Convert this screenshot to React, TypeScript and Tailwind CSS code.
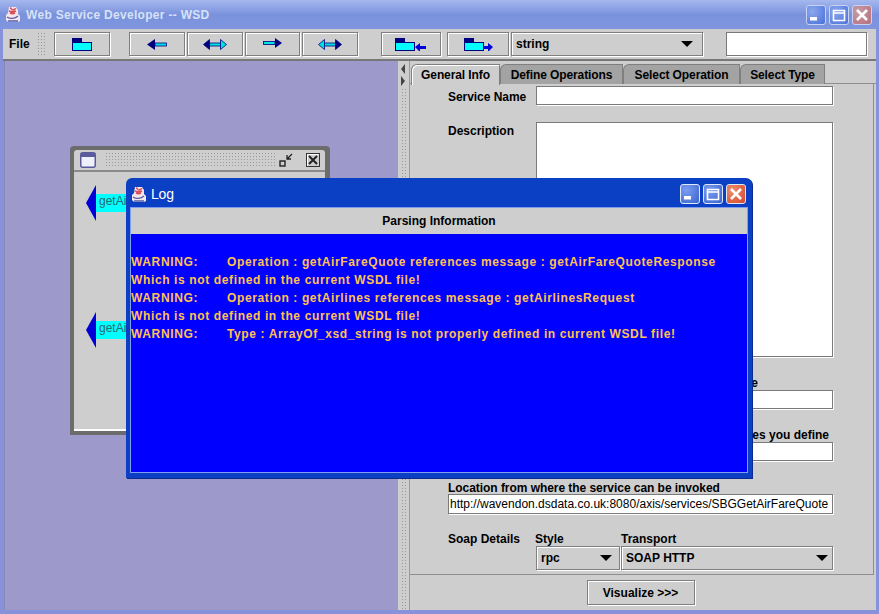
import React from "react";

const bevel = "border border-[#7f7f7f] shadow-[1px_1px_0_#ffffff,inset_1px_1px_0_#ffffff]";
const field = "border border-[#7a7a7a] bg-white shadow-[1px_1px_0_#ffffff]";
const dots = "bg-[radial-gradient(#9a9a9a_0.8px,transparent_0.9px)] bg-[length:3px_3px]";

function JavaIcon() {
  return (
    <svg width="16" height="17" viewBox="0 0 16 17">
      <path d="M4 1h7l2 3v4l2 2v5l-2 1H3l-2-2V9l2-2z" fill="#f4e6ea" />
      <path d="M5 2c2 0 1 2 3 2s2-2 3-1M4 5c2 1 5 1 7 0M5 7c2 1 3 1 5 0" stroke="#d8505a" strokeWidth="1.5" fill="none" />
      <path d="M2 11c3 2 8 2 11-1M3 15h10" stroke="#5a5fa8" strokeWidth="1.3" fill="none" />
    </svg>
  );
}

function WinBtn({ kind, size, washed }: { kind: "min" | "max" | "close"; size: number; washed?: boolean }) {
  const bg =
    kind === "close"
      ? washed
        ? "bg-[radial-gradient(circle_at_30%_30%,#c99aa6,#b4707c)] border-[#c7d3f3]"
        : "bg-[radial-gradient(circle_at_30%_30%,#ee8f70,#d4472a)] border-[#dfe8fb]"
      : washed
        ? "bg-[radial-gradient(circle_at_30%_30%,#8aa8ee,#4a70d8)] border-[#c7d3f3]"
        : "bg-[radial-gradient(circle_at_30%_30%,#7b9df0,#3a62cf)] border-[#dfe8fb]";
  return (
    <div className={`rounded-[3px] border flex items-center justify-center ${bg}`} style={{ width: size, height: size }}>
      <svg width={size - 4} height={size - 4} viewBox="0 0 16 16">
        {kind === "min" && <rect x="2" y="10" width="7" height="3.5" fill="#fff" />}
        {kind === "max" && <path d="M2.5 3.5h11v10h-11z M2.5 3.5h11v2.5h-11z" fill="none" stroke="#fff" strokeWidth="1.6" />}
        {kind === "close" && <path d="M3 3l10 10M13 3L3 13" stroke="#fff" strokeWidth="2.6" />}
      </svg>
    </div>
  );
}

function Folder() {
  return (
    <>
      <rect x="0" y="0" width="10" height="5" fill="#00007f" />
      <rect x="0.5" y="4.5" width="19" height="8" fill="#00ffff" stroke="#00007f" />
    </>
  );
}

function ToolBtn({ className, children }: { className: string; children: React.ReactNode }) {
  return <div className={`h-[24px] flex items-center justify-center bg-[#cecece] ${bevel} ${className}`}>{children}</div>;
}

function Arrow({ kind }: { kind: "left" | "both" | "right" | "both2" }) {
  if (kind === "left")
    return (
      <svg width="20" height="11" viewBox="0 0 20 11">
        <rect x="8" y="4" width="11.5" height="3" fill="#00e0e0" stroke="#00007f" strokeWidth="0.8" />
        <path d="M8 0v11L0 5.5z" fill="#00007f" />
      </svg>
    );
  if (kind === "right")
    return (
      <svg width="20" height="10" viewBox="0 0 20 10" className="mb-[2px]">
        <rect x="0.5" y="3.5" width="11.5" height="3" fill="#00e0e0" stroke="#00007f" strokeWidth="0.8" />
        <path d="M12 0v10l7 -5z" fill="#00007f" />
      </svg>
    );
  const leftFill = kind === "both2" ? "#00e0e0" : "#00007f";
  const rightFill = kind === "both" ? "#00e0e0" : "#00007f";
  return (
    <svg width="24" height="11" viewBox="0 0 24 11">
      <rect x="6" y="4" width="12" height="3" fill="#00e0e0" stroke="#00007f" strokeWidth="0.8" />
      <path d="M6.5 0.5v10L0.5 5.5z" fill={leftFill} stroke="#00007f" strokeWidth="0.8" />
      <path d="M17.5 0.5v10l6 -5z" fill={rightFill} stroke="#00007f" strokeWidth="0.8" />
    </svg>
  );
}

function Caret() {
  return <div className="w-0 h-0 border-x-[6px] border-x-transparent border-t-[6px] border-t-black" />;
}

function Combo({ label, className, caretPad }: { label: string; className: string; caretPad: string }) {
  return (
    <div className={`h-[24px] flex items-center justify-between bg-[#cecece] pl-[4px] ${caretPad} ${bevel} ${className}`}>
      <span>{label}</span>
      <Caret />
    </div>
  );
}

function Tab({ label, active, className }: { label: string; active?: boolean; className: string }) {
  return (
    <div
      className={`flex items-center justify-center rounded-tl-[6px] border-t border-r border-l border-[#7f7f7f] tracking-[-0.1px] ${
        active ? "bg-[#cecece] border-b-0 h-[21px] shadow-[inset_1px_1px_0_#ffffff]" : "bg-[#a3a3a3] h-[20px]"
      } ${className}`}
    >
      {label}
    </div>
  );
}

function ServiceNode({ className }: { className: string }) {
  return (
    <div className={`flex items-center ml-[12px] ${className}`}>
      <svg width="10" height="36" viewBox="0 0 10 36" className="shrink-0">
        <path d="M10 0v36L0 18z" fill="#0000d8" />
      </svg>
      <div className="h-[18px] w-[30px] bg-[#00ffff] font-normal text-[#2a6a70] pl-[3px] leading-[14px] text-[12px]">getAi</div>
    </div>
  );
}

const logLines = [
  ["WARNING:", "Operation : getAirFareQuote references message : getAirFareQuoteResponse"],
  ["Which is not defined in the current WSDL file!"],
  ["WARNING:", "Operation : getAirlines references message : getAirlinesRequest"],
  ["Which is not defined in the current WSDL file!"],
  ["WARNING:", "Type : ArrayOf_xsd_string is not properly defined in current WSDL file!"],
];

export default function App() {
  return (
    <div className="relative w-[879px] h-[614px] overflow-hidden bg-[#8792da] font-['Liberation_Sans',Arial,sans-serif] text-[12px] font-bold text-black">
      {/* Title bar */}
      <div className="h-[29px] pl-[5px] pr-[7px] flex items-center bg-gradient-to-b from-[#a5b8ee] via-[#7a92dc] to-[#7f95df]">
        <JavaIcon />
        <span className="ml-[5px] text-[12px] tracking-[0.3px] text-[#d6e2f8]">Web Service Developer -- WSD</span>
        <div className="ml-auto flex gap-[3px]">
          <WinBtn kind="min" size={20} washed />
          <WinBtn kind="max" size={20} washed />
          <WinBtn kind="close" size={20} washed />
        </div>
      </div>

      {/* Toolbar */}
      <div className="h-[32px] mx-[3px] pt-[3px] flex items-start bg-[#cecece] border-b-2 border-b-[#777777]">
        <span className="ml-[6px] w-[28px] h-[24px] flex items-center">File</span>
        <div className={`w-[9px] h-[24px] ${dots}`} />
        <ToolBtn className="ml-[8px] w-[56px]">
          <svg width="20" height="13" viewBox="0 0 20 13"><Folder /></svg>
        </ToolBtn>
        <ToolBtn className="ml-[19px] w-[56px]"><Arrow kind="left" /></ToolBtn>
        <ToolBtn className="ml-[2px] w-[56px]"><Arrow kind="both" /></ToolBtn>
        <ToolBtn className="ml-[2px] w-[55px]"><Arrow kind="right" /></ToolBtn>
        <ToolBtn className="ml-[2px] w-[56px]"><Arrow kind="both2" /></ToolBtn>
        <ToolBtn className="ml-[23px] w-[60px]">
          <svg width="32" height="13" viewBox="0 0 32 13">
            <Folder />
            <path d="M20 9l5-4v3h6v3h-6v3z" fill="#0000d8" />
          </svg>
        </ToolBtn>
        <ToolBtn className="ml-[6px] w-[62px]">
          <svg width="29" height="13" viewBox="0 0 29 13">
            <Folder />
            <path d="M29 9l-5-4v3h-5v3h5v3z" fill="#0000d8" />
          </svg>
        </ToolBtn>
        <Combo label="string" className="ml-[2px] w-[192px]" caretPad="pr-[9px]" />
        <div className={`ml-[23px] w-[141px] h-[24px] ${field}`} />
      </div>

      {/* Main */}
      <div className="flex h-[549px] ml-[3px] mr-[3px]">
        <div className="ml-[1px] w-[394px] bg-[#9d99cb] border-l border-[#8a88b8]" />
        <div className="w-[11px] bg-[#cecece] pt-[3px] pl-[3px] flex flex-col">
          <div className="w-0 h-0 border-y-[5px] border-y-transparent border-r-[4px] border-r-[#444444]" />
          <div className="mt-[2px] w-0 h-0 border-y-[5px] border-y-transparent border-l-[4px] border-l-[#444444]" />
          <div className={`mt-[2px] flex-1 w-[6px] ${dots}`} />
        </div>
        <div className="flex-1 bg-[#cecece] flex flex-col relative border-l border-[#9a9a9a]">
          {/* Tabs */}
          <div className="h-[23px] pt-[3px] pl-[1px] flex items-start border-b border-b-[#8f8f8f]">
            <Tab label="General Info" active className="w-[89px] z-10" />
            <Tab label="Define Operations" className="w-[123px]" />
            <Tab label="Select Operation" className="w-[117px]" />
            <Tab label="Select Type" className="w-[85px]" />
          </div>
          {/* Form */}
          <div className="flex-1 flex flex-col pl-[38px] pr-[40px] mr-[2px] border-r border-r-[#8f8f8f]">
            <div className="flex h-[20px] mt-[1px] items-center">
              <span className="w-[88px] pt-[3px] tracking-[-0.05px]">Service Name</span>
              <div className={`w-[297px] h-[19px] ${field}`} />
            </div>
            <div className="flex mt-[17px] h-[236px]">
              <span className="w-[88px] mt-[2px] leading-[14px]">Description</span>
              <div className={`w-[297px] h-[235px] ${field}`} />
            </div>
            <div className="h-[14px] mt-[18px] text-right leading-[14px] pr-[75px]">e</div>
            <div className={`ml-[88px] w-[297px] h-[19px] ${field}`} />
            <div className="h-[14px] mt-[18px] text-right leading-[14px] pr-[4px] pt-[1px]">es you define</div>
            <div className={`ml-[88px] w-[297px] h-[19px] mt-[1px] ${field}`} />
            <div className="h-[14px] mt-[19px] pt-[1px] leading-[14px] tracking-[-0.05px]">Location from where the service can be invoked</div>
            <div className={`w-[385px] h-[20px] pl-[1px] flex items-center font-normal text-[12px] overflow-hidden whitespace-nowrap ${field}`}>
              http://wavendon.dsdata.co.uk:8080/axis/services/SBGGetAirFareQuote
            </div>
            <div className="flex mt-[18px] h-[14px] leading-[14px]">
              <span className="w-[87px]">Soap Details</span>
              <span className="w-[86px]">Style</span>
              <span>Transport</span>
            </div>
            <div className="flex ml-[88px]">
              <Combo label="rpc" className="w-[84px]" caretPad="pr-[7px]" />
              <Combo label="SOAP HTTP" className="ml-[1px] w-[212px]" caretPad="pr-[4px]" />
            </div>
          </div>
          <div className="h-[36px] mr-[2px] border-t border-[#8f8f8f] flex justify-center pt-[5px] pr-[3px]">
            <div className={`w-[108px] h-[25px] flex items-center justify-center bg-[#cecece] ${bevel}`}>Visualize &gt;&gt;&gt;</div>
          </div>
        </div>
      </div>

      {/* Internal frame */}
      <div className="absolute left-[70px] top-[146px] w-[260px] h-[289px] rounded-t-[4px] bg-[#6c6c6c] p-[4px] pr-[5px] flex flex-col">
        <div className="h-[22px] bg-[#cecece] flex items-center pl-[6px] pr-[5px] rounded-t-[3px] border-b-2 border-b-[#8a8a8a]">
          <svg width="16" height="16" viewBox="0 0 16 16">
            <rect x="0.75" y="0.75" width="14.5" height="14.5" rx="2" fill="#eef0fa" stroke="#5a5a9c" strokeWidth="1.5" />
            <rect x="1" y="1" width="14" height="4" fill="#5a5a9c" />
          </svg>
          <div className={`ml-[9px] w-[170px] h-[16px] ${dots}`} />
          <svg width="16" height="14" viewBox="0 0 16 14" className="ml-[4px]">
            <rect x="1" y="8" width="5" height="5" fill="none" stroke="#222" strokeWidth="1.4" />
            <path d="M8 6l5-5M8 2v4h4" fill="none" stroke="#222" strokeWidth="1.3" />
          </svg>
          <div className="ml-[11px] w-[14px] h-[14px] border border-[#333] shadow-[inset_1px_1px_0_#fff] flex items-center justify-center">
            <svg width="10" height="10" viewBox="0 0 10 10"><path d="M1 1l8 8M9 1L1 9" stroke="#222" strokeWidth="2" /></svg>
          </div>
        </div>
        <div className="flex-1 bg-[#cecece] flex flex-col border-b-2 border-b-white">
          <ServiceNode className="mt-[13px]" />
          <ServiceNode className="mt-[91px]" />
        </div>
      </div>

      {/* Log window */}
      <div className="absolute left-[126px] top-[178px] w-[626px] h-[300px] rounded-t-[6px] bg-[#0b3fc4] flex flex-col px-[4px] pb-[5px] shadow-[1px_1px_0_#0a2a90]">
        <div className="h-[29px] flex items-center pl-[1px] pr-[2px] pt-[3px] text-white text-[13px]">
          <JavaIcon />
          <span className="ml-[4px] font-normal text-[14px] tracking-[-0.2px]">Log</span>
          <div className="ml-auto flex gap-[3px]">
            <WinBtn kind="min" size={20} />
            <WinBtn kind="max" size={20} />
            <WinBtn kind="close" size={20} />
          </div>
        </div>
        <div className="flex-1 flex flex-col border border-[#7f9cf0]">
          <div className="h-[26px] bg-[#cecece] flex items-center justify-center shrink-0">Parsing Information</div>
          <div className="flex-1 bg-[#0000ff] pt-[19px] text-[#ffc14f] tracking-[0.63px] text-[12px] leading-[18px]">
            {logLines.map((line, i) => (
              <div key={i} className="flex whitespace-nowrap">
                <span className={line.length > 1 ? "w-[96px]" : ""}>{line[0]}</span>
                {line[1] && <span>{line[1]}</span>}
              </div>
            ))}
          </div>
        </div>
      </div>
    </div>
  );
}
